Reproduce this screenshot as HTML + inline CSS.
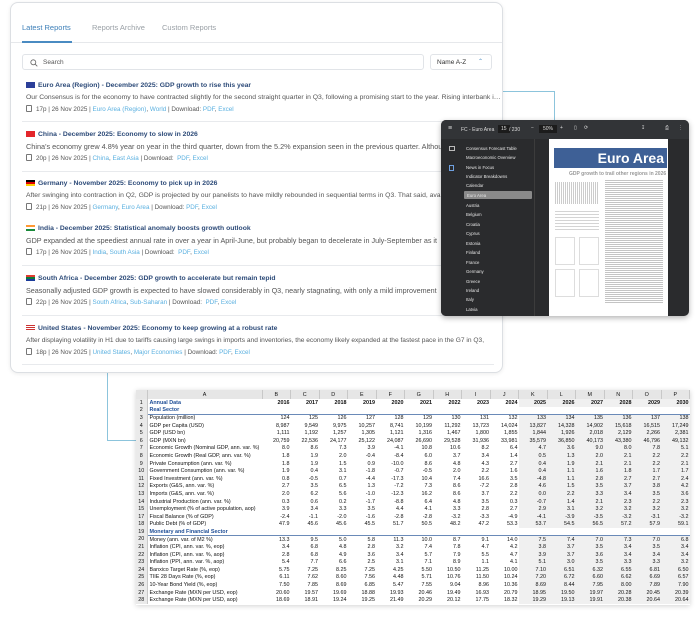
<!DOCTYPE html>
<html><head><meta charset="utf-8">
<style>
*{box-sizing:border-box;margin:0;padding:0}
body{width:695px;height:618px;background:#fff;position:relative;overflow:hidden;font-family:"Liberation Sans",sans-serif}
.card{position:absolute;left:10px;top:2px;width:493px;height:371px;border:1px solid #dcdfe3;border-radius:8px;background:#fff;box-shadow:0 1px 4px rgba(0,0,0,.08)}
.tab{position:absolute;top:20px;font-size:7.5px;color:#9aa0a6}
.tab.on{color:#3d7fb8}
.uline{position:absolute;left:21px;top:38px;width:50px;height:2px;background:#4a8bc2}
.hdiv{position:absolute;left:0;right:0;top:39px;height:1px;background:#e6e8eb}
.search{position:absolute;left:11px;top:51px;width:402px;height:16px;border:1px solid #e1e4e8;border-radius:3px;font-size:6.5px;color:#555;padding:4px 0 0 20px}
.sort{position:absolute;left:419px;top:51px;width:62px;height:16px;border:1px solid #e1e4e8;border-radius:3px;font-size:6.5px;color:#333;padding:4px 0 0 6px}
.item{position:absolute;left:15px;width:478px;white-space:nowrap;overflow:hidden}
.t{font-size:6.8px;font-weight:bold;color:#2c4a78;height:12px;line-height:12px}
.d{font-size:6.8px;color:#555;height:12px;line-height:12px;overflow:hidden;text-overflow:ellipsis}
.m{font-size:6.3px;color:#555;height:12px;line-height:12px}
.m a{color:#5ab0e0;text-decoration:none}
.flag{display:inline-block;width:9px;height:6px;vertical-align:-0.5px;margin-right:3px}
.doc{display:inline-block;width:6px;height:7px;border:1px solid #777;border-radius:1px;vertical-align:-1px;margin-right:4px}
.sep{position:absolute;left:21px;width:472px;height:1px;background:#e8eaed}
.ln{position:absolute;background:#8cc4dc}
.pdf{position:absolute;left:441px;top:120px;width:248px;height:196px;background:#2a2b2d;border-radius:5px;overflow:hidden;box-shadow:0 2px 6px rgba(0,0,0,.3)}
.tb{position:absolute;left:0;top:0;width:100%;height:19px;background:#323437;color:#ddd;font-size:5px}
.side{position:absolute;left:0;top:19px;width:94px;height:177px;background:#2a2b2d;border-right:1px solid #3c3c3c}
.side div{position:absolute;left:25px;font-size:4.3px;color:#e6e6e6}
.page{position:absolute;left:108px;top:29px;width:119px;height:177px;background:#fff}
.sheet{position:absolute;left:136px;top:390px;width:554px;height:215px;background:#fff;box-shadow:0 1px 5px rgba(0,0,0,.18);overflow:hidden}
table{border-collapse:collapse;table-layout:fixed;font-size:5.4px;color:#111;width:554px}
tr{height:7.6px}
td,th{height:7.6px;line-height:6px;padding:0 1px;white-space:nowrap;overflow:hidden;border:0}
th{background:#eaeaea;font-weight:normal;text-align:center;border-right:1px solid #c8c8c8}
td{text-align:right}
td.l{text-align:left;padding-left:2px}
tr.b td{color:#1f4e96;font-weight:bold}
tr.b td.y{color:#111}
tr.hd{height:9px}
tr.hd th{background:#e6e6e6;height:9px}
td.g{background:#f0f0f0}
</style></head><body>

<div class="ln" style="left:503px;top:91px;width:52px;height:1px"></div>
<div class="ln" style="left:554px;top:91px;width:1px;height:30px"></div>
<div class="ln" style="left:107px;top:372px;width:1px;height:69px"></div>
<div class="ln" style="left:107px;top:440px;width:30px;height:1px"></div>

<div class="card">
 <div class="tab on" style="left:11px">Latest Reports</div>
 <div class="tab" style="left:81px">Reports Archive</div>
 <div class="tab" style="left:151px">Custom Reports</div>
 <div class="hdiv"></div><div class="uline" style="left:11px"></div>
 <div class="search"><svg style="position:absolute;left:7px;top:4px" width="8" height="8" viewBox="0 0 8 8"><circle cx="3.3" cy="3.3" r="2.5" fill="none" stroke="#666" stroke-width=".8"/><path d="M5.2 5.2L7.3 7.3" stroke="#666" stroke-width=".8"/></svg>Search</div>
 <div class="sort">Name A-Z<span style="position:absolute;right:8px;top:3px;color:#4a8bc2;font-size:6px">&#8963;</span></div>

 <div class="item" style="top:77px"><div class="t"><span class="flag" style="background:#2b3f99"></span>Euro Area (Region) - December 2025: GDP growth to rise this year</div>
 <div class="d">Our Consensus is for the economy to have contracted slightly for the second straight quarter in Q3, following a promising start to the year. Rising interbank int...</div>
 <div class="m"><span class="doc"></span>17p | 26 Nov 2025 | <a>Euro Area (Region)</a>, <a>World</a> | Download: <a>PDF</a>, <a>Excel</a></div></div>
 <div class="sep" style="top:118px;left:11px"></div>

 <div class="item" style="top:126px"><div class="t"><span class="flag" style="background:#e3262b"></span>China - December 2025: Economy to slow in 2026</div>
 <div class="d" style="font-size:7.3px">China's economy grew 4.8% year on year in the third quarter, down from the 5.2% expansion seen in the previous quarter. Although</div>
 <div class="m"><span class="doc"></span>20p | 26 Nov 2025 | <a>China</a>, <a>East Asia</a> | Download: &nbsp;<a>PDF</a>, <a>Excel</a></div></div>
 <div class="sep" style="top:168px;left:11px"></div>

 <div class="item" style="top:175px"><div class="t"><span class="flag" style="background:linear-gradient(#000 33%,#d00 33%,#d00 66%,#fc0 66%)"></span>Germany - November 2025: Economy to pick up in 2026</div>
 <div class="d">After swinging into contraction in Q2, GDP is projected by our panelists to have mildly rebounded in sequential terms in Q3. That said, available data</div>
 <div class="m"><span class="doc"></span>21p | 26 Nov 2025 | <a>Germany</a>, <a>Euro Area</a> | Download: <a>PDF</a>, <a>Excel</a></div></div>

 <div class="item" style="top:220px"><div class="t"><span class="flag" style="background:linear-gradient(#f93 33%,#fff 33%,#fff 66%,#1a8a3a 66%)"></span>India - December 2025: Statistical anomaly boosts growth outlook</div>
 <div class="d" style="font-size:7.2px">GDP expanded at the speediest annual rate in over a year in April-June, but probably began to decelerate in July-September as it</div>
 <div class="m"><span class="doc"></span>17p | 26 Nov 2025 | <a>India</a>, <a>South Asia</a> | Download: &nbsp;<a>PDF</a>, <a>Excel</a></div></div>
 <div class="sep" style="top:262px;left:11px"></div>

 <div class="item" style="top:270px"><div class="t"><span class="flag" style="background:linear-gradient(#e03c31 33%,#0a7a3a 33%,#0a7a3a 66%,#1a3a9a 66%)"></span>South Africa - December 2025: GDP growth to accelerate but remain tepid</div>
 <div class="d" style="font-size:7.2px">Seasonally adjusted GDP growth is expected to have slowed considerably in Q3, nearly stagnating, with only a mild improvement</div>
 <div class="m"><span class="doc"></span>22p | 26 Nov 2025 | <a>South Africa</a>, <a>Sub-Saharan</a> | Download: &nbsp;<a>PDF</a>, <a>Excel</a></div></div>
 <div class="sep" style="top:312px;left:11px"></div>

 <div class="item" style="top:320px"><div class="t"><span class="flag" style="background:repeating-linear-gradient(#c33 0 1px,#fff 1px 2px)"></span>United States - November 2025: Economy to keep growing at a robust rate</div>
 <div class="d" style="font-size:6.6px">After displaying volatility in H1 due to tariffs causing large swings in imports and inventories, the economy likely expanded at the fastest pace in the G7 in Q3,</div>
 <div class="m"><span class="doc"></span>18p | 26 Nov 2025 | <a>United States</a>, <a>Major Economies</a> | Download: <a>PDF</a>, <a>Excel</a></div></div>
 <div class="sep" style="top:361px;left:11px"></div>
</div>

<div class="pdf">
 <div class="tb">
  <span style="position:absolute;left:7px;top:5px;font-size:7px">&#8801;</span>
  <span style="position:absolute;left:20px;top:7px">FC - Euro Area</span>
  <span style="position:absolute;left:57px;top:5px;background:#1c1c1c;padding:1px 3px">15</span>
  <span style="position:absolute;left:68px;top:7px">/ 230</span>
  <span style="position:absolute;left:90px;top:5px">&#8722;</span>
  <span style="position:absolute;left:98px;top:5px;background:#1c1c1c;padding:1px 4px">50%</span>
  <span style="position:absolute;left:119px;top:5px">+</span>
  <span style="position:absolute;left:133px;top:5px">&#9647;</span>
  <span style="position:absolute;left:143px;top:5px">&#10227;</span>
  <span style="position:absolute;left:200px;top:5px">&#8615;</span>
  <span style="position:absolute;left:224px;top:5px">&#9113;</span>
  <span style="position:absolute;left:237px;top:5px">&#8942;</span>
 </div>
 <div class="side">
  <span style="position:absolute;left:8px;top:7px;width:6px;height:5px;border:1px solid #bbb"></span>
  <span style="position:absolute;left:8px;top:26px;width:5px;height:6px;border:1px solid #6fa0e0"></span>
  <div style="top:7px">Consensus Forecast Table</div>
  <div style="top:16px">Macroeconomic Overview</div>
  <div style="top:26px">News in Focus</div>
  <div style="top:35px">Indicator Breakdowns</div>
  <div style="top:44px">Calendar</div>
  <div style="top:52px;left:23px;width:68px;height:8px;background:#8a8a8a;padding:2px 0 0 3px;border-radius:1px">Euro Area</div>
  <div style="top:64px">Austria</div>
  <div style="top:73px">Belgium</div>
  <div style="top:83px">Croatia</div>
  <div style="top:92px">Cyprus</div>
  <div style="top:102px">Estonia</div>
  <div style="top:111px">Finland</div>
  <div style="top:121px">France</div>
  <div style="top:130px">Germany</div>
  <div style="top:140px">Greece</div>
  <div style="top:149px">Ireland</div>
  <div style="top:158px">Italy</div>
  <div style="top:168px">Latvia</div>
 </div>
 <div class="page" style="top:19px">
  <div style="position:absolute;left:5px;top:9px;width:113px;height:20px;background:#3e6096;color:#fff;font-weight:bold;font-size:14px;text-align:right;padding-right:3px;line-height:20px">Euro Area</div>
  <div style="position:absolute;left:20px;top:32px;font-size:5px;color:#999;font-weight:bold">GDP growth to trail other regions in 2026</div>
  <div style="position:absolute;left:6px;top:43px;width:44px;height:22px;background:repeating-linear-gradient(90deg,#ccc 0 1px,#fff 1px 2px)"></div>
  <div style="position:absolute;left:56px;top:41px;width:58px;height:123px;background:repeating-linear-gradient(#888 0 .7px,#fff .7px 2px)"></div>
  <div style="position:absolute;left:6px;top:72px;width:44px;height:20px;background:repeating-linear-gradient(#aaa 0 .6px,#fff .6px 3px)"></div>
  <div style="position:absolute;left:6px;top:98px;width:20px;height:28px;border:1px solid #ddd"></div>
  <div style="position:absolute;left:30px;top:98px;width:20px;height:28px;border:1px solid #ddd"></div>
  <div style="position:absolute;left:6px;top:130px;width:20px;height:28px;border:1px solid #ddd"></div>
  <div style="position:absolute;left:30px;top:130px;width:20px;height:28px;border:1px solid #ddd"></div>
 </div>
</div>

<div class="sheet">
<table>
<colgroup><col style="width:11px"><col style="width:115px"><col span="15" style="width:28.5px"></colgroup>
<tr class="hd"><th></th><th>A</th><th>B</th><th>C</th><th>D</th><th>E</th><th>F</th><th>G</th><th>H</th><th>I</th><th>J</th><th>K</th><th>L</th><th>M</th><th>N</th><th>O</th><th>P</th></tr>
<tr class="b"><th>1</th><td class="l">Annual Data</td><td class="y">2016</td><td class="y">2017</td><td class="y">2018</td><td class="y">2019</td><td class="y">2020</td><td class="y">2021</td><td class="y">2022</td><td class="y">2023</td><td class="y">2024</td><td class="y g">2025</td><td class="y g">2026</td><td class="y g">2027</td><td class="y g">2028</td><td class="y g">2029</td><td class="y g">2030</td></tr>
<tr class="b"><th>2</th><td class="l" style="border-bottom:1px solid #6a8ab8">Real Sector</td><td colspan="15" style="border-bottom:1px solid #6a8ab8"></td></tr>
<tr><th>3</th><td class="l">Population (million)</td><td>124</td><td>125</td><td>126</td><td>127</td><td>128</td><td>129</td><td>130</td><td>131</td><td>132</td><td class="g">133</td><td class="g">134</td><td class="g">135</td><td class="g">136</td><td class="g">137</td><td class="g">138</td></tr>
<tr><th>4</th><td class="l">GDP per Capita (USD)</td><td>8,987</td><td>9,549</td><td>9,975</td><td>10,257</td><td>8,741</td><td>10,199</td><td>11,292</td><td>13,723</td><td>14,024</td><td class="g">13,827</td><td class="g">14,328</td><td class="g">14,902</td><td class="g">15,618</td><td class="g">16,515</td><td class="g">17,249</td></tr>
<tr><th>5</th><td class="l">GDP (USD bn)</td><td>1,111</td><td>1,192</td><td>1,257</td><td>1,305</td><td>1,121</td><td>1,316</td><td>1,467</td><td>1,800</td><td>1,855</td><td class="g">1,844</td><td class="g">1,926</td><td class="g">2,018</td><td class="g">2,129</td><td class="g">2,266</td><td class="g">2,381</td></tr>
<tr><th>6</th><td class="l">GDP (MXN bn)</td><td>20,759</td><td>22,536</td><td>24,177</td><td>25,122</td><td>24,087</td><td>26,690</td><td>29,528</td><td>31,936</td><td>33,981</td><td class="g">35,579</td><td class="g">36,850</td><td class="g">40,173</td><td class="g">43,380</td><td class="g">46,796</td><td class="g">49,132</td></tr>
<tr><th>7</th><td class="l">Economic Growth (Nominal GDP, ann. var. %)</td><td>8.0</td><td>8.6</td><td>7.3</td><td>3.9</td><td>-4.1</td><td>10.8</td><td>10.6</td><td>8.2</td><td>6.4</td><td class="g">4.7</td><td class="g">3.6</td><td class="g">9.0</td><td class="g">8.0</td><td class="g">7.8</td><td class="g">5.1</td></tr>
<tr><th>8</th><td class="l">Economic Growth (Real GDP, ann. var. %)</td><td>1.8</td><td>1.9</td><td>2.0</td><td>-0.4</td><td>-8.4</td><td>6.0</td><td>3.7</td><td>3.4</td><td>1.4</td><td class="g">0.5</td><td class="g">1.3</td><td class="g">2.0</td><td class="g">2.1</td><td class="g">2.2</td><td class="g">2.2</td></tr>
<tr><th>9</th><td class="l">Private Consumption (ann. var. %)</td><td>1.8</td><td>1.9</td><td>1.5</td><td>0.9</td><td>-10.0</td><td>8.6</td><td>4.8</td><td>4.3</td><td>2.7</td><td class="g">0.4</td><td class="g">1.9</td><td class="g">2.1</td><td class="g">2.1</td><td class="g">2.2</td><td class="g">2.1</td></tr>
<tr><th>10</th><td class="l">Government Consumption (ann. var. %)</td><td>1.9</td><td>0.4</td><td>3.1</td><td>-1.8</td><td>-0.7</td><td>-0.5</td><td>2.0</td><td>2.2</td><td>1.6</td><td class="g">0.4</td><td class="g">1.1</td><td class="g">1.6</td><td class="g">1.8</td><td class="g">1.7</td><td class="g">1.7</td></tr>
<tr><th>11</th><td class="l">Fixed Investment (ann. var. %)</td><td>0.8</td><td>-0.5</td><td>0.7</td><td>-4.4</td><td>-17.3</td><td>10.4</td><td>7.4</td><td>16.6</td><td>3.5</td><td class="g">-4.8</td><td class="g">1.1</td><td class="g">2.8</td><td class="g">2.7</td><td class="g">2.7</td><td class="g">2.4</td></tr>
<tr><th>12</th><td class="l">Exports (G&amp;S, ann. var. %)</td><td>2.7</td><td>3.5</td><td>6.5</td><td>1.3</td><td>-7.2</td><td>7.3</td><td>8.6</td><td>-7.2</td><td>2.8</td><td class="g">4.6</td><td class="g">1.5</td><td class="g">3.5</td><td class="g">3.7</td><td class="g">3.8</td><td class="g">4.2</td></tr>
<tr><th>13</th><td class="l">Imports (G&amp;S, ann. var. %)</td><td>2.0</td><td>6.2</td><td>5.6</td><td>-1.0</td><td>-12.3</td><td>16.2</td><td>8.6</td><td>3.7</td><td>2.2</td><td class="g">0.0</td><td class="g">2.2</td><td class="g">3.3</td><td class="g">3.4</td><td class="g">3.5</td><td class="g">3.6</td></tr>
<tr><th>14</th><td class="l">Industrial Production (ann. var. %)</td><td>0.3</td><td>0.6</td><td>0.2</td><td>-1.7</td><td>-8.8</td><td>6.4</td><td>4.8</td><td>3.5</td><td>0.3</td><td class="g">-0.7</td><td class="g">1.4</td><td class="g">2.1</td><td class="g">2.3</td><td class="g">2.2</td><td class="g">2.3</td></tr>
<tr><th>15</th><td class="l">Unemployment (% of active population, aop)</td><td>3.9</td><td>3.4</td><td>3.3</td><td>3.5</td><td>4.4</td><td>4.1</td><td>3.3</td><td>2.8</td><td>2.7</td><td class="g">2.9</td><td class="g">3.1</td><td class="g">3.2</td><td class="g">3.2</td><td class="g">3.2</td><td class="g">3.2</td></tr>
<tr><th>17</th><td class="l">Fiscal Balance (% of GDP)</td><td>-2.4</td><td>-1.1</td><td>-2.0</td><td>-1.6</td><td>-2.8</td><td>-2.8</td><td>-3.2</td><td>-3.3</td><td>-4.9</td><td class="g">-4.1</td><td class="g">-3.9</td><td class="g">-3.5</td><td class="g">-3.2</td><td class="g">-3.1</td><td class="g">-3.2</td></tr>
<tr><th>18</th><td class="l">Public Debt (% of GDP)</td><td>47.9</td><td>45.6</td><td>45.6</td><td>45.5</td><td>51.7</td><td>50.5</td><td>48.2</td><td>47.2</td><td>53.3</td><td class="g">53.7</td><td class="g">54.5</td><td class="g">56.5</td><td class="g">57.2</td><td class="g">57.9</td><td class="g">59.1</td></tr>
<tr class="b"><th>19</th><td class="l" style="border-bottom:1px solid #6a8ab8">Monetary and Financial Sector</td><td colspan="15" style="border-bottom:1px solid #6a8ab8"></td></tr>
<tr><th>20</th><td class="l">Money (ann. var. of M2 %)</td><td>13.3</td><td>9.5</td><td>5.0</td><td>5.8</td><td>11.3</td><td>10.0</td><td>8.7</td><td>9.1</td><td>14.0</td><td class="g">7.5</td><td class="g">7.4</td><td class="g">7.0</td><td class="g">7.3</td><td class="g">7.0</td><td class="g">6.8</td></tr>
<tr><th>21</th><td class="l">Inflation (CPI, ann. var. %, eop)</td><td>3.4</td><td>6.8</td><td>4.8</td><td>2.8</td><td>3.2</td><td>7.4</td><td>7.8</td><td>4.7</td><td>4.2</td><td class="g">3.8</td><td class="g">3.7</td><td class="g">3.5</td><td class="g">3.4</td><td class="g">3.5</td><td class="g">3.4</td></tr>
<tr><th>22</th><td class="l">Inflation (CPI, ann. var. %, aop)</td><td>2.8</td><td>6.8</td><td>4.9</td><td>3.6</td><td>3.4</td><td>5.7</td><td>7.9</td><td>5.5</td><td>4.7</td><td class="g">3.9</td><td class="g">3.7</td><td class="g">3.6</td><td class="g">3.4</td><td class="g">3.4</td><td class="g">3.4</td></tr>
<tr><th>23</th><td class="l">Inflation (PPI, ann. var. %, aop)</td><td>5.4</td><td>7.7</td><td>6.6</td><td>2.5</td><td>3.1</td><td>7.1</td><td>8.9</td><td>1.1</td><td>4.1</td><td class="g">5.1</td><td class="g">3.0</td><td class="g">3.5</td><td class="g">3.3</td><td class="g">3.3</td><td class="g">3.2</td></tr>
<tr><th>24</th><td class="l">Banxico Target Rate (%, eop)</td><td>5.75</td><td>7.25</td><td>8.25</td><td>7.25</td><td>4.25</td><td>5.50</td><td>10.50</td><td>11.25</td><td>10.00</td><td class="g">7.10</td><td class="g">6.51</td><td class="g">6.32</td><td class="g">6.55</td><td class="g">6.81</td><td class="g">6.50</td></tr>
<tr><th>25</th><td class="l">TIIE 28 Days Rate (%, eop)</td><td>6.11</td><td>7.62</td><td>8.60</td><td>7.56</td><td>4.48</td><td>5.71</td><td>10.76</td><td>11.50</td><td>10.24</td><td class="g">7.20</td><td class="g">6.72</td><td class="g">6.60</td><td class="g">6.62</td><td class="g">6.69</td><td class="g">6.57</td></tr>
<tr><th>26</th><td class="l">10-Year Bond Yield (%, eop)</td><td>7.50</td><td>7.85</td><td>8.69</td><td>6.85</td><td>5.47</td><td>7.55</td><td>9.04</td><td>8.96</td><td>10.36</td><td class="g">8.69</td><td class="g">8.44</td><td class="g">7.95</td><td class="g">8.00</td><td class="g">7.89</td><td class="g">7.90</td></tr>
<tr><th>27</th><td class="l">Exchange Rate (MXN per USD, eop)</td><td>20.60</td><td>19.57</td><td>19.69</td><td>18.88</td><td>19.93</td><td>20.46</td><td>19.49</td><td>16.93</td><td>20.79</td><td class="g">18.95</td><td class="g">19.50</td><td class="g">19.97</td><td class="g">20.28</td><td class="g">20.45</td><td class="g">20.39</td></tr>
<tr><th>28</th><td class="l">Exchange Rate (MXN per USD, aop)</td><td>18.69</td><td>18.91</td><td>19.24</td><td>19.25</td><td>21.49</td><td>20.29</td><td>20.12</td><td>17.75</td><td>18.32</td><td class="g">19.29</td><td class="g">19.13</td><td class="g">19.91</td><td class="g">20.38</td><td class="g">20.64</td><td class="g">20.64</td></tr>
</table>
</div>
</body></html>
